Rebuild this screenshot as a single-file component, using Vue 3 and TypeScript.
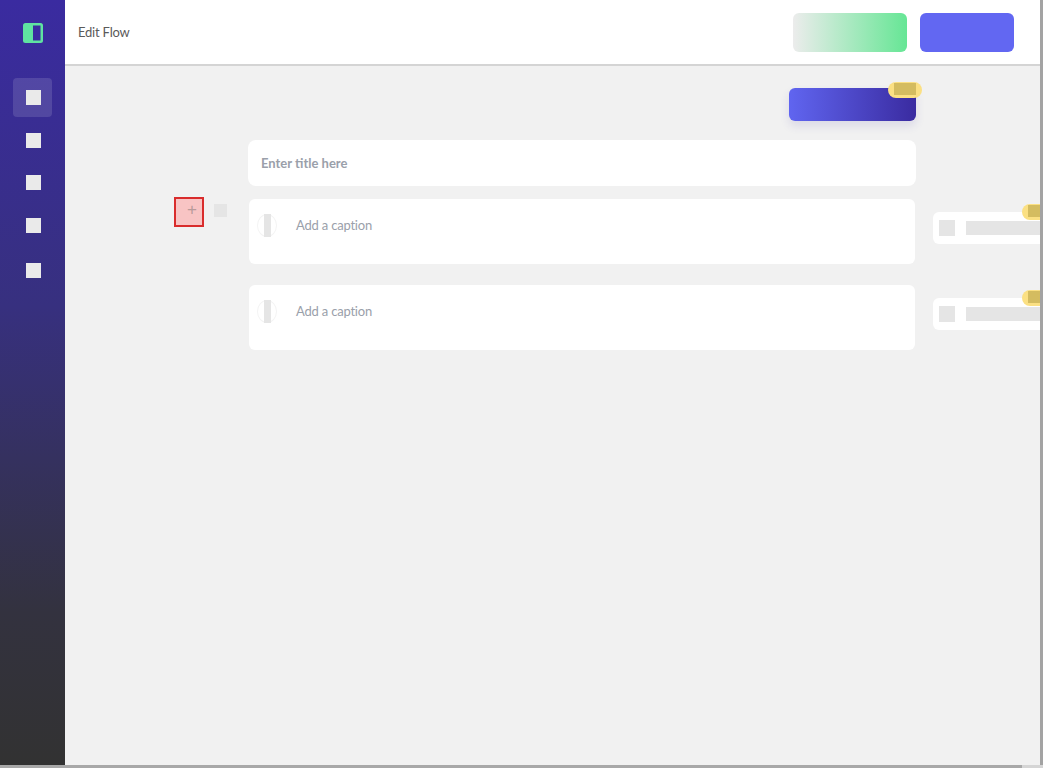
<script setup lang="ts">
const navItems: { id: number; active: boolean }[] = [
  { id: 1, active: true },
  { id: 2, active: false },
  { id: 3, active: false },
  { id: 4, active: false },
  { id: 5, active: false },
];
const blocks: { id: number; caption: string; first: boolean }[] = [
  { id: 1, caption: "Add a caption", first: true },
  { id: 2, caption: "Add a caption", first: false },
];
</script>

<template>
  <div class="page">
    <div class="shell">
      <aside class="sidebar">
        <svg class="logo" width="20" height="20" viewBox="0 0 20 20">
          <rect x="0" y="0" width="20" height="20" rx="2.5" fill="#5fe3a1" />
          <rect x="10" y="2.5" width="7.5" height="15" fill="#3a2ba0" />
        </svg>
        <nav class="nav">
          <div v-for="n in navItems" :key="n.id" class="nav-item" :class="{ active: n.active, last: n.id === 5 }">
            <span class="nav-icon"></span>
          </div>
        </nav>
      </aside>
      <div class="main">
        <header class="header">
          <div class="title">Edit Flow</div>
          <div class="actions">
            <div class="btn-green"></div>
            <div class="btn-blue"></div>
          </div>
        </header>
        <div class="content">
          <div class="toolbar">
            <div class="btn-publish">
              <div class="badge top"><span class="badge-fill"></span></div>
            </div>
          </div>
          <div class="title-card">Enter title here</div>
          <div v-for="b in blocks" :key="b.id" class="row" :class="{ second: !b.first }">
            <div class="gutter">
              <template v-if="b.first">
                <div class="add-box">+</div>
                <div class="handle"></div>
              </template>
            </div>
            <div class="caption-card">
              <div class="thumb"><span class="thumb-bar"></span></div>
              <div class="caption">{{ b.caption }}</div>
            </div>
            <div class="side-card">
              <span class="side-square"></span>
              <span class="side-line"></span>
              <div class="badge side"><span class="badge-fill"></span></div>
            </div>
          </div>
        </div>
      </div>
      <div class="scroll-y"></div>
    </div>
    <div class="scroll-x"></div>
  </div>
</template>

<style scoped>
.page {
  width: 1043px;
  height: 768px;
  overflow: hidden;
  display: flex;
  flex-direction: column;
  background: #f1f1f1;
  font-family: Lato, "Open Sans", sans-serif;
}
.shell {
  flex: 1;
  min-height: 0;
  display: flex;
}
.sidebar {
  width: 65px;
  flex: none;
  display: flex;
  flex-direction: column;
  align-items: center;
  padding-top: 23px;
  box-sizing: border-box;
  background: linear-gradient(180deg, #3a2ba0 0%, #37307f 40%, #33323f 80%, #323232 100%);
}
.logo {
  display: block;
}
.nav {
  margin-top: 35px;
  display: flex;
  flex-direction: column;
  align-items: center;
}
.nav-item {
  width: 39px;
  height: 39px;
  margin-bottom: 3.5px;
  border-radius: 4px;
  display: flex;
  align-items: center;
  justify-content: center;
}
.nav-item.active {
  background: rgba(255, 255, 255, 0.13);
}
.nav-item.last {
  margin-top: 3px;
}
.nav-icon {
  width: 15px;
  height: 15px;
  margin-left: 1px;
  background: #eaeaea;
}
.main {
  flex: 1;
  min-width: 0;
  display: flex;
  flex-direction: column;
  overflow: hidden;
}
.header {
  height: 66px;
  flex: none;
  box-sizing: border-box;
  background: #fff;
  border-bottom: 2px solid #d4d4d4;
  display: flex;
  align-items: center;
  justify-content: space-between;
  padding: 0 26px 0 13px;
}
.title {
  font-size: 13px;
  letter-spacing: -0.2px;
  color: #5a5a5a;
}
.actions {
  display: flex;
  gap: 13px;
}
.btn-green {
  width: 114px;
  height: 39px;
  border-radius: 6px;
  background: linear-gradient(90deg, #ececec 0%, #66e695 100%);
}
.btn-blue {
  width: 94px;
  height: 39px;
  border-radius: 6px;
  background: #6267f2;
}
.content {
  flex: 1;
  position: relative;
  display: flex;
  flex-direction: column;
}
.toolbar {
  width: 851px;
  display: flex;
  justify-content: flex-end;
  padding-top: 22px;
}
.btn-publish {
  position: relative;
  width: 127px;
  height: 33px;
  border-radius: 6px;
  background: linear-gradient(90deg, #6065f0 0%, #3a2ba0 100%);
  box-shadow: 0 5px 10px rgba(60, 50, 160, 0.12);
}
.badge {
  position: absolute;
  height: 16px;
  width: 34px;
  border-radius: 8px;
  background: #fbe083;
  display: flex;
  justify-content: center;
}
.badge.top {
  right: -6px;
  top: -6px;
}
.badge-fill {
  width: 22px;
  height: 12px;
  margin-top: 1px;
  background: #d4bc60;
}
.title-card {
  margin: 19px 0 0 183px;
  width: 668px;
  height: 46px;
  box-sizing: border-box;
  border-radius: 8px;
  background: #fff;
  padding-left: 13px;
  line-height: 46px;
  font-size: 13px;
  font-weight: 700;
  color: #9aa0aa;
}
.row {
  display: flex;
  margin-top: 13px;
  align-items: flex-start;
}
.row.second {
  margin-top: 21px;
}
.gutter {
  width: 184px;
  flex: none;
  height: 30px;
  position: relative;
  display: flex;
  align-items: flex-start;
  padding-left: 109px;
  box-sizing: border-box;
  margin-top: -2px;
}
.add-box {
  width: 30px;
  height: 30px;
  box-sizing: border-box;
  border: 2px solid #d92c2c;
  background: #f8c4c4;
  color: #b89a9a;
  font-size: 17px;
  line-height: 22px;
  padding-left: 6px;
  text-align: center;
  font-family: "Liberation Sans", sans-serif;
}
.handle {
  width: 13px;
  height: 13px;
  margin: 7px 0 0 10px;
  background: #e5e5e5;
}
.caption-card {
  width: 666px;
  height: 65px;
  flex: none;
  box-sizing: border-box;
  border-radius: 6px;
  background: #fff;
  display: flex;
  padding: 15px 0 0 8px;
}
.thumb {
  width: 20px;
  height: 23px;
  border-radius: 50%;
  border: 1px solid #f4f4f4;
  box-sizing: border-box;
  display: flex;
  justify-content: center;
}
.thumb-bar {
  width: 7px;
  height: 23px;
  margin-top: -1px;
  background: #e5e5e5;
}
.caption {
  margin-left: 19px;
  font-size: 13px;
  letter-spacing: -0.2px;
  line-height: 22px;
  color: #9aa0aa;
}
.side-card {
  position: relative;
  margin: 13px 0 0 18px;
  width: 120px;
  height: 32px;
  flex: none;
  border-radius: 6px 0 0 6px;
  background: #fff;
  display: flex;
  align-items: center;
  padding-left: 6px;
  box-sizing: border-box;
}
.side-square {
  width: 16px;
  height: 16px;
  background: #e5e5e5;
  flex: none;
}
.side-line {
  margin-left: 11px;
  height: 14px;
  flex: 1;
  background: #e5e5e5;
}
.badge.side {
  right: 0;
  left: 89px;
  top: -8px;
  width: 34px;
  justify-content: flex-start;
  padding-left: 6px;
  box-sizing: border-box;
}
.scroll-y {
  width: 3px;
  flex: none;
  background: #a3a3a3;
}
.scroll-x {
  height: 3px;
  flex: none;
  background: linear-gradient(90deg, #a8a8a8 0, #a8a8a8 98%, #d5d5d5 98%);
}
</style>
